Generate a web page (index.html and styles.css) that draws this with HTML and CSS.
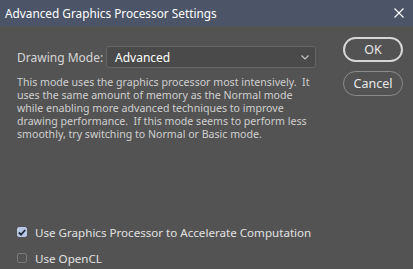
FILE: index.html
```html
<!DOCTYPE html>
<html>
<head>
<meta charset="utf-8">
<link rel="stylesheet" href="styles.css">
</head>
<body>
<div class="dialog">
  <div class="titlebar">
    <span class="title">Advanced Graphics Processor Settings</span>
    <svg class="close" width="10" height="10" viewBox="0 0 10 10"><path d="M0.5 0.5 L9.5 9.5 M9.5 0.5 L0.5 9.5" stroke="#ffffff" stroke-width="1.1" fill="none"/></svg>
  </div>
  <div class="content">
    <div class="main">
      <div class="moderow">
        <span class="label">Drawing Mode:</span>
        <div class="select">
          <span>Advanced</span>
          <svg class="chev" width="8" height="5" viewBox="0 0 8 5"><path d="M0.5 0.5 L4 4 L7.5 0.5" stroke="#c8c8c8" stroke-width="1.1" fill="none"/></svg>
        </div>
      </div>
      <p class="desc">This mode uses the graphics processor most intensively.&nbsp; It<br>uses the same amount of memory as the Normal mode<br>while enabling more advanced techniques to improve<br>drawing performance.&nbsp; If this mode seems to perform less<br>smoothly, try switching to Normal or Basic mode.</p>
    </div>
    <div class="buttons">
      <div class="btn primary">OK</div>
      <div class="btn">Cancel</div>
    </div>
  </div>
  <div class="checks">
    <div class="check"><span class="box on"><svg width="8" height="7" viewBox="0 0 8 7"><path d="M0.8 3.5 L3 5.7 L7.2 1" stroke="#1e2a3c" stroke-width="1.8" fill="none"/></svg></span><span>Use Graphics Processor to Accelerate Computation</span></div>
    <div class="check"><span class="box"></span><span>Use OpenCL</span></div>
  </div>
</div>
</body>
</html>
```
FILE: styles.css
```css
html, body {
  margin: 0;
  padding: 0;
  background: #535353;
}
.dialog {
  width: 413px;
  height: 269px;
  background: #535353;
  font-family: "Noto Sans", "Open Sans", sans-serif;
  color: #dcdcdc;
  display: flex;
  flex-direction: column;
}
.titlebar {
  height: 26px;
  background: #4b5567;
  display: flex;
  align-items: center;
  justify-content: space-between;
  padding: 0 9px 0 5px;
  box-sizing: border-box;
}
.title {
  color: #ffffff;
  font-size: 11.8px;
}
.close {
  display: block;
}
.content {
  display: flex;
  padding: 11px 10px 0 17px;
}
.main {
  width: 310px;
}
.moderow {
  display: flex;
  align-items: center;
  margin-top: 9px;
}
.label {
  font-size: 12px;
  color: #d6d6d6;
  width: 89px;
}
.select {
  width: 210px;
  height: 22px;
  box-sizing: border-box;
  border: 1px solid #666666;
  border-radius: 3px;
  background: #4a4a4a;
  display: flex;
  align-items: center;
  justify-content: space-between;
  padding: 0 6px 0 8px;
  font-size: 12px;
  color: #ffffff;
}
.chev {
  display: block;
  margin-top: 1px;
}
.desc {
  margin: 8px 0 0 0;
  font-size: 10.6px;
  line-height: 13px;
  color: #d0d0d0;
  white-space: nowrap;
}
.buttons {
  margin-left: auto;
  display: flex;
  flex-direction: column;
  gap: 9px;
}
.btn {
  width: 60px;
  height: 25px;
  box-sizing: border-box;
  border: 1px solid #8c8c8c;
  border-radius: 13px;
  display: flex;
  align-items: center;
  justify-content: center;
  font-size: 12.5px;
  color: #e8e8e8;
}
.btn.primary {
  border: 2px solid #d6d6d6;
}
.checks {
  margin-top: auto;
  padding: 0 0 2px 17px;
  display: flex;
  flex-direction: column;
  gap: 8px;
}
.check {
  display: flex;
  align-items: center;
  font-size: 11.6px;
  color: #e2e2e2;
  height: 18px;
}
.box {
  width: 10px;
  height: 10px;
  box-sizing: border-box;
  border: 1px solid #7a7a7a;
  border-radius: 2px;
  margin-right: 8px;
  display: flex;
  align-items: center;
  justify-content: center;
}
.box.on {
  background: #b9c8e2;
  border-color: #b9c8e2;
}
```
